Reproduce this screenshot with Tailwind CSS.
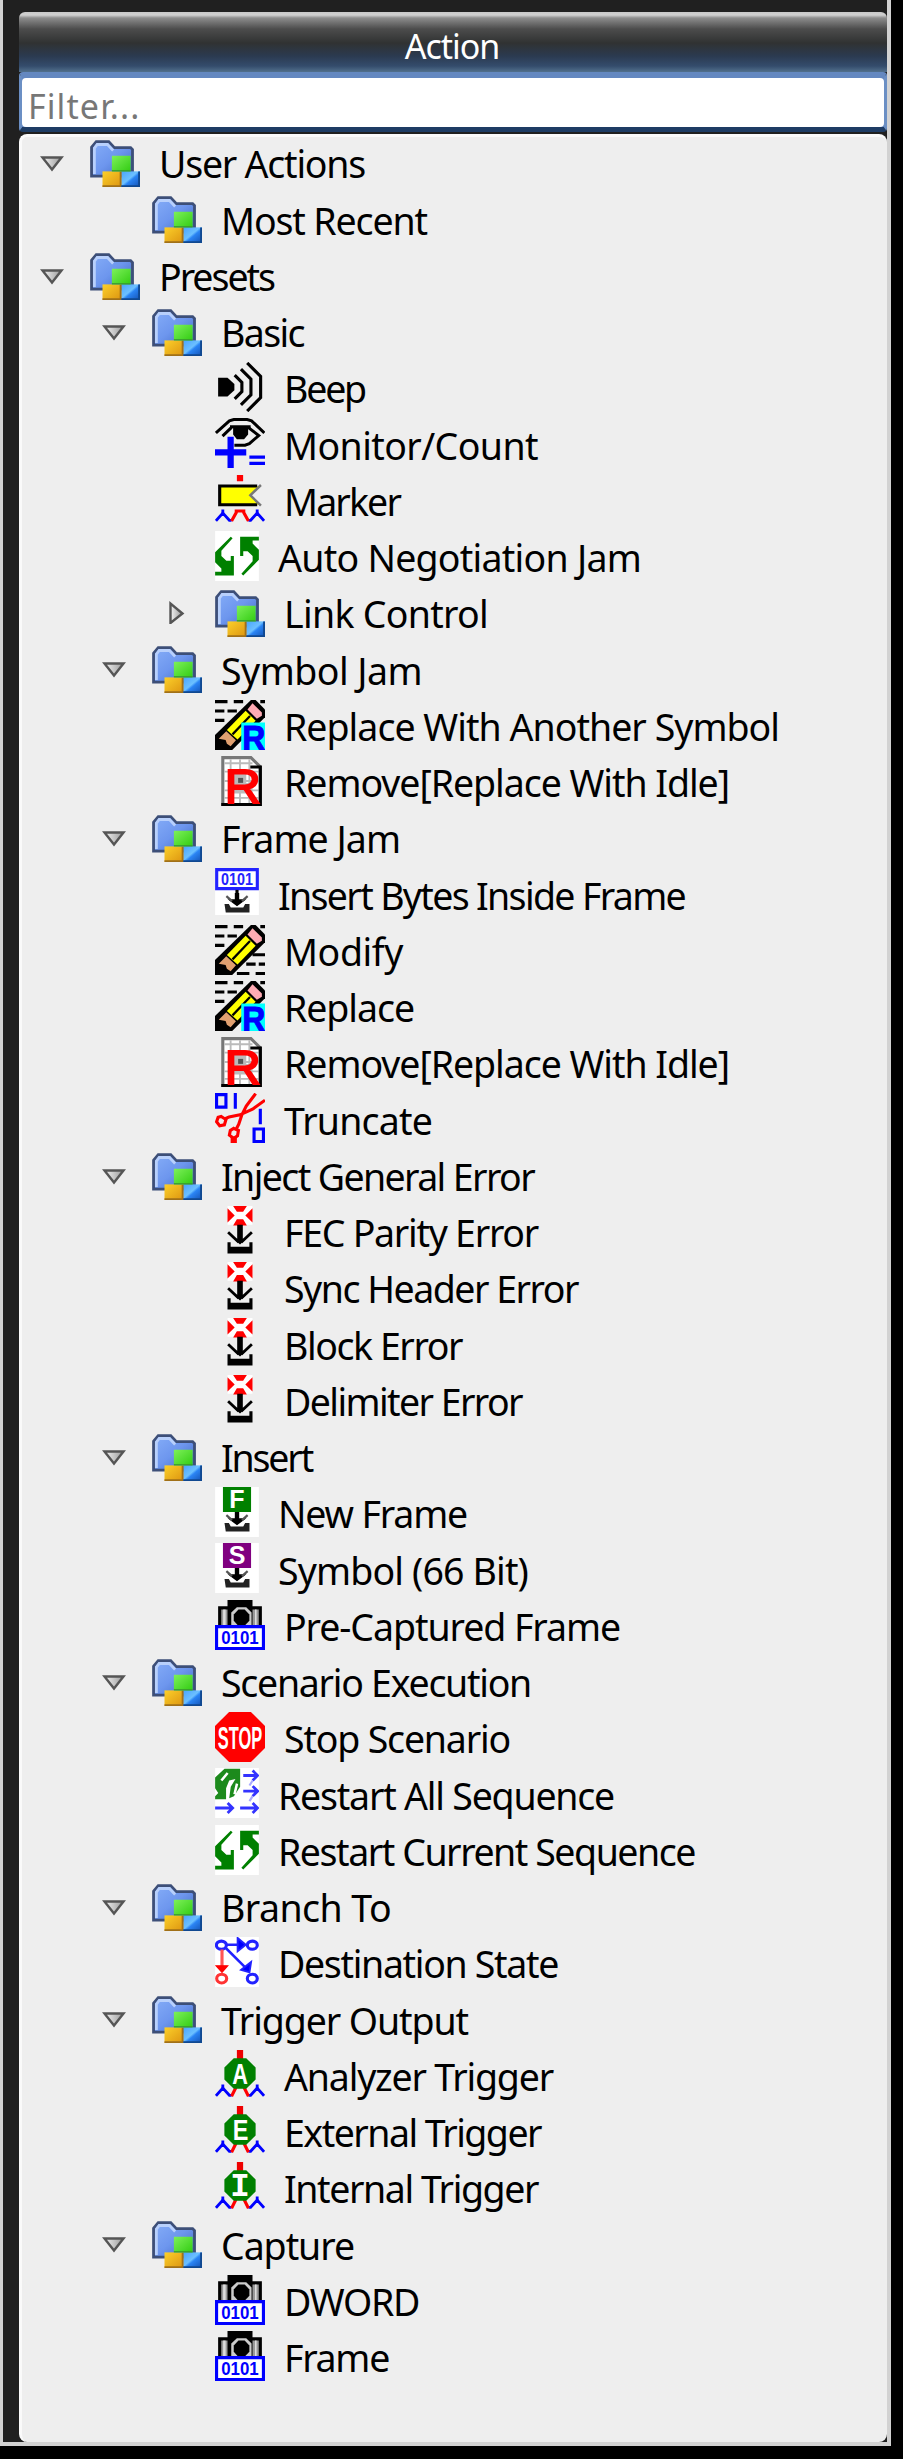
<!DOCTYPE html>
<html lang="en">

<head>
    <meta charset="UTF-8">
    <meta name="viewport" content="width=device-width, initial-scale=1.0">
    <title>Action</title>
    <script src="https://cdn.jsdelivr.net/npm/@tailwindcss/browser@4"></script>
</head>

<body class="bg-black font-['Noto_Sans',sans-serif]">
    <!-- Icons, drawn on a 16px grid -->
    <svg class="absolute size-0">
        <defs>
            <linearGradient id="gFolder" x1="0" y1="0" x2="1" y2="1">
                <stop offset="0" stop-color="#86aef8" /><stop offset=".5" stop-color="#6d96ee" /><stop offset="1" stop-color="#3f66c0" />
            </linearGradient>
            <linearGradient id="gGreen" x1="0" y1="0" x2="1" y2="1">
                <stop offset="0" stop-color="#7df05a" /><stop offset="1" stop-color="#32cc12" />
            </linearGradient>
            <linearGradient id="gOrange" x1="0" y1="0" x2="1" y2="1">
                <stop offset="0" stop-color="#fcd02a" /><stop offset="1" stop-color="#dc9410" />
            </linearGradient>
            <linearGradient id="gBlue" x1="0" y1="0" x2="1" y2="1">
                <stop offset="0" stop-color="#4aa4fc" /><stop offset=".45" stop-color="#6cc0ff" /><stop offset=".55" stop-color="#2a84f4" /><stop offset="1" stop-color="#1450b0" />
            </linearGradient>
            <linearGradient id="gArrow" x1="0" y1="0" x2="1" y2="0">
                <stop offset="0" stop-color="#f4f4f4" /><stop offset="1" stop-color="#999" />
            </linearGradient>
            <g id="recycle" fill="#008000">
                <path id="recycleArrow" d="M5 1.8L0 6.8V10L2 12V13H0V14.2H6V8H5V9.5H3.6L2 8V6.3L5.6 2.3Z" />
                <use href="#recycleArrow" transform="rotate(180 7 8)" />
            </g>
            <g id="tray">
                <path d="M6.3 8H7.7V10H10L7 12.2L4 10H6.3Z" />
                <path d="M3 11.5H4.4L5 12.6H9L9.6 11.5H11V14.2H3.4Z" fill="#222" />
                <path d="M3.6 9L5.4 10.6M10.4 9L8.6 10.6" stroke="#555" stroke-width=".7" />
            </g>
            <g id="pencil">
                <path d="M0 .5H4M6 .5H9M14.5 .5H16M0 3.5H3M4 3.5H7M0 6.5H3" stroke="#000" />
                <path d="M11.5 0H13L16 3V5.5L5.5 16H0V11.2Z" />
                <path d="M12 1L15 4V5L13.4 6L10.4 3Z" fill="#ffabb4" />
                <path d="M9.8 3.4L13 6.6L7.2 12.6L3.8 9.6Z" fill="#ff0" />
                <path d="M11.2 5.1L5.6 11" stroke="#000" stroke-width=".7" />
                <path d="M3.6 10L6.7 12.9L5 14.8L3.8 14L3.4 12.8L1.2 12.4Z" fill="#e0a070" />
            </g>
            <g id="wave" fill="none" stroke="#00f" stroke-width=".9">
                <path d="M.3 14.7L2.5 12.2L4.6 14.5H5.3M15.7 14.7L13.5 12.2L11.4 14.5H10.7" />
                <path d="M2.5 11V13M13.5 11V13" />
            </g>
            <g id="triggerBase">
                <path d="M7 0H9V3H7Z" fill="#e00" />
                <use href="#wave" />
                <path d="M5.3 14.8L6.7 12M10.7 14.8L9.3 12" stroke="red" />
                <path d="M6 2.6H10L13 5.6V9.4L10 12.4H6L3 9.4V5.6Z" fill="#008000" />
            </g>
            <g id="iconFolder" transform="translate(0 1)">
                <path d="M.5 11.5V2.3L2 .5H6L7.8 2.4H13L13.6 3V11.5Z" fill="url(#gFolder)" stroke="#3d4f78" stroke-width=".9" />
                <path d="M1.4 10.8V2.6L2.3 1.4H5.6L7.4 3.3" fill="none" stroke="#b8d0fc" stroke-width=".9" />
                <path d="M4 10H10V15H4Z" fill="url(#gOrange)" />
                <path d="M10 10H16V15H10Z" fill="url(#gBlue)" />
                <path d="M4 14.7H10M9.8 10V15" stroke="#a07018" stroke-width=".6" />
                <path d="M10 14.7H16M15.7 10V15" stroke="#104890" stroke-width=".6" />
                <path d="M7 5H13V10H7Z" fill="url(#gGreen)" />
                <path d="M7 9.8H13" stroke="#3a9a30" stroke-width=".4" />
            </g>
            <g id="iconBeep">
                <path d="M1 5H4L6.2 7V9L4 11H1Z" />
                <path d="M6.3 4.2L8.6 6.5V9.5L6.3 11.8M8.3 2.3L11.5 5.5V10.5L8.3 13.7M10.3 .3L14.6 4.6V11.4L10.3 15.7" fill="none" stroke="#000" />
            </g>
            <g id="iconMonitor">
                <path d="M.3 4.8L4.6 .9L6 .5H10.3L11.7 .9L15.8 4.8M2.4 5.8L5.3 3M10.6 3L14 5.6L11 8.2L9.6 8.7H6.2" fill="none" stroke="#000" stroke-width=".95" />
                <path d="M4.8 2.3H11.4V3.3H10.6V5.3L9.3 6.8H7L5.8 5.3V3.3H4.8Z" />
                <path d="M4 6H6V10H10V12H6V16H4V12H0V10H4Z" fill="#00f" />
                <path d="M11 12.5H16M11 14.5H16" stroke="#00f" />
            </g>
            <g id="iconMarker">
                <path d="M7 0H9V2H7Z" fill="red" />
                <path d="M1.5 3.5H14L11.3 6.5L14 9.5H1.5Z" fill="#ff0" />
                <path d="M13.5 3.5H1.5V9.5H13.5" fill="none" stroke="#000" />
                <path d="M14.7 3.2L11.3 6.5L14.7 9.8" fill="none" stroke="#777" stroke-width=".8" />
                <use href="#wave" />
                <path d="M5.3 14.7L6.8 12V11.5H9.2V12L10.7 14.7" fill="none" stroke="red" />
            </g>
            <g id="iconRecycle">
                <path d="M0 0H14V16H0Z" fill="#fff" />
                <use href="#recycle" />
            </g>
            <g id="iconReplace">
                <use href="#pencil" />
                <path d="M8.4 7.2H16V16H8.4Z" fill="#0ff" />
                <text x="8.7" y="16" font-family="Liberation Sans" font-weight="700" font-size="11" textLength="7.4" lengthAdjust="spacingAndGlyphs" fill="#00f" stroke="#00f" stroke-width=".3">R</text>
            </g>
            <g id="iconModify">
                <use href="#pencil" />
                <path d="M12 9.5H16M10 12.5H13M14 12.5H16M7 15.5H11M13 15.5H16" stroke="#000" />
            </g>
            <g id="iconRemove">
                <path d="M2.5 .5H11.5L14.5 3.5V15.5H2.5Z" fill="#fff" stroke="#777" />
                <path d="M5 1V15M8 1V15M11 1V15M3 2.3H12M3 5H14M3 8H14M3 11H14M3 13.4H14" stroke="#bbb" stroke-width=".6" />
                <path d="M6 5H10V8.6H12V12H6Z" fill="#bbb" />
                <path d="M7.4 7H9V8.6H7.4Z" fill="#555" />
                <path d="M11.3 3.5H14.5V15.5H2" fill="none" stroke="#000" />
                <text x="3" y="14.9" font-family="Liberation Sans" font-weight="400" font-size="15.6" textLength="11.7" lengthAdjust="spacingAndGlyphs" fill="red" stroke="red" stroke-width=".6">R</text>
            </g>
            <g id="iconBytes">
                <path d="M0 0H14V15H0Z" fill="#fff" />
                <path d="M.5 .5H13.5V6.6H.5Z" fill="#fff" stroke="#22f" />
                <text x="1.9" y="5.3" font-family="Liberation Sans" font-weight="700" font-size="5" textLength="10.2" lengthAdjust="spacingAndGlyphs" fill="#22f">0101</text>
                <path d="M6.5 7H7.5V9H6.5Z" />
                <use href="#tray" />
            </g>
            <g id="iconTruncate" fill="none">
                <path d="M.5 .5H3.5V4.5H.5ZM6.5 0V5M14.5 5V10M12.5 11.5H15.5V15.5H12.5Z" stroke="#00f" />
                <path d="M16 2.3L12 5.2L8 7L4.5 7.7L3.2 8.2M13 .2L10 4.2L8.6 7L7.6 10L6.8 11.5" stroke="red" />
                <path d="M2 7.5L3.5 8.5L3 10.2L1.5 10.5L.5 9.2L1 7.8ZM6 11.3L7.5 12L7.2 13.7L6 14.5L4.6 13.5L4.9 12ZM6 14V16" stroke="red" />
                <path d="M5 14H7V16H5Z" fill="red" />
            </g>
            <g id="iconError">
                <path d="M4 0H12V6H4Z" fill="#fff" />
                <path d="M5.8 0H10.2L9 1.8H7ZM4 .7L6.3 3L4 5.3ZM12 .7L9.7 3L12 5.3ZM7 4.2H9L10.2 6.2H5.8Z" fill="red" />
                <path d="M7.1 6H8.9V10.5H10L8 12.3L6 10.5H7.1Z" />
                <path d="M4.2 8.4L7.6 11.6M11.8 8.4L8.4 11.6" stroke="#000" stroke-width=".9" />
                <path d="M4 11.6H5V13H11V11.6H12V15.2H4Z" />
            </g>
            <g id="iconNewFrame">
                <path d="M0 0H14V16H0Z" fill="#fff" />
                <path d="M2.5 0H11.5V8H2.5Z" fill="#008000" />
                <text x="7" y="6.7" text-anchor="middle" font-family="Liberation Sans" font-weight="700" font-size="8" fill="#fff">F</text>
                <use href="#tray" />
            </g>
            <g id="iconSymbol">
                <path d="M0 0H14V16H0Z" fill="#fff" />
                <path d="M2.5 0H11.5V8H2.5Z" fill="#800080" />
                <text x="7" y="6.8" text-anchor="middle" font-family="Liberation Sans" font-weight="700" font-size="8" fill="#fff">S</text>
                <use href="#tray" />
            </g>
            <g id="iconCamera">
                <path d="M1 2H4V0H12V2H15V9H1Z" />
                <path d="M2 3H4V8H2ZM12 3H14V8H12Z" fill="#999" />
                <path d="M2.6 3H3.4V8H2.6ZM12.8 3H13.3V8H12.8Z" fill="#ddd" />
                <path d="M7 2.3H10L11.7 4V8H5.2V4Z" fill="#ccc" />
                <path d="M7.5 3H9.5L11 4.6V6.6L9.7 8H7.2L6 6.6V4.6Z" />
                <path d="M.5 8.5H15.5V15.5H.5Z" fill="#fff" stroke="#00f" />
                <text x="2" y="14" font-family="Liberation Sans" font-weight="700" font-size="5.9" textLength="12" lengthAdjust="spacingAndGlyphs" fill="#00f">0101</text>
            </g>
            <g id="iconStop">
                <path d="M4.5 0H11.5L16 4.5V11.5L11.5 16H4.5L0 11.5V4.5Z" fill="red" />
                <text x=".9" y="11.7" font-family="Liberation Sans" font-weight="700" font-size="10" textLength="14.2" lengthAdjust="spacingAndGlyphs" fill="#fff">STOP</text>
            </g>
            <g id="iconRestartAll">
                <path d="M0 0H14V16H0Z" fill="#fff" />
                <path d="M3 .2H8V6L6 9L4.5 9.7L5 6L6.5 3.5L4.5 4L3.5 6.5V10H0V9L1 8L0 6.5V3Z" fill="#1c8a1c" />
                <path d="M2 4L4 1.6M6.2 8.4L7 5" stroke="#fff" stroke-width=".8" />
                <path d="M9 2.4H13.5M12 .8L13.6 2.4L12 4M9 7.4H13.5M12 5.8L13.6 7.4L12 9M0 12.8H5.5M4 11.2L5.6 12.8L4 14.4M8 12.8H13.5M12 11.2L13.6 12.8L12 14.4" fill="none" stroke="#33f" stroke-width=".9" />
                <path d="M12 4L11 5.6M12 9L11 10.6" stroke="#aaf" stroke-width=".7" />
            </g>
            <g id="iconDestination" fill="none" stroke="#22f">
                <path d="M0 0H14V16H0Z" fill="#fff" stroke="none" />
                <path d="M3.5 2.5H9M3.5 3.6L10.5 10.6" stroke-width=".8" />
                <path d="M7.2 .3L9.8 2.5L7.2 4.6ZM11.5 8L11 11.3L8.3 10.5Z" fill="#00f" stroke-width=".6" />
                <ellipse cx="2" cy="2.6" rx="1.6" ry="1.3" />
                <ellipse cx="11.9" cy="2.6" rx="1.6" ry="1.3" />
                <ellipse cx="11.9" cy="13.3" rx="1.6" ry="1.4" />
                <path d="M2.2 4V9.5" stroke="#f55" />
                <path d="M.3 9.2H4L2.2 11.3Z" fill="red" stroke="red" stroke-width=".4" />
                <ellipse cx="2.1" cy="13.3" rx="1.6" ry="1.4" stroke="#f33" />
            </g>
            <g id="iconAnalyzer">
                <use href="#triggerBase" />
                <text x="8" y="10.9" text-anchor="middle" font-family="Liberation Sans" font-weight="700" font-size="9.4" textLength="5" lengthAdjust="spacingAndGlyphs" fill="#fff">A</text>
            </g>
            <g id="iconExternal">
                <use href="#triggerBase" />
                <text x="8.2" y="10.9" text-anchor="middle" font-family="Liberation Sans" font-weight="700" font-size="9.4" textLength="5" lengthAdjust="spacingAndGlyphs" fill="#fff">E</text>
            </g>
            <g id="iconInternal">
                <use href="#triggerBase" />
                <text x="8" y="10.9" text-anchor="middle" font-family="Liberation Mono" font-weight="700" font-size="10.4" fill="#fff">I</text>
            </g>
            <path id="arrowOpen" d="M2.5 7.5H21.5L12 19.5Z" fill="url(#gArrow)" stroke="#555" stroke-width="2.4" />
            <path id="arrowClosed" d="M5.5 3.5V23L17.5 13.5Z" fill="url(#gArrow)" stroke="#555" stroke-width="2.4" />
        </defs>
    </svg>

    <div class="flex h-[2446px] w-[891px] flex-col border-r-4 border-b-4 border-l-3 border-[#d2d2d2] bg-[#202020] pt-3 pl-4">
        <header class="flex h-[60px] shrink-0 items-center justify-center rounded-t-md bg-[linear-gradient(#c8c8c8_0px,#d0d0d0_3px,#8c8c8c_6px,#4c4c4c_17px,#303232_31px,#2b3a50_44px,#344c6c_54px,#52708c_60px)] pt-2 text-[34px] leading-none tracking-[-1px] text-white">
            <h1 class="mr-[2px]">Action</h1>
        </header>
        <div class="h-[60px] shrink-0 rounded-sm border-x-3 border-t-6 border-b-5 border-x-[#6b8fc4] border-t-[#6488c0] border-b-[#1e3c64] bg-[#6488c0]">
            <input type="text" placeholder="Filter..." class="block h-[49px] w-full rounded-sm bg-white px-[6px] pt-[8px] text-[34px] tracking-[1.1px] placeholder:text-[#777] outline-none">
        </div>
        <main class="mt-[2px] flex-1 rounded-lg border-t-3 border-l-3 border-[#fafafa] bg-[#eee]">
            <ul id="tree" class="-mt-[3px]"></ul>
        </main>
    </div>

    <script>
        // level, icon, label, label width, closed
        const items = [
            [0, 'Folder', 'User Actions', 206],
            [1, 'Folder', 'Most Recent', 206],
            [0, 'Folder', 'Presets', 115],
            [1, 'Folder', 'Basic', 83],
            [2, 'Beep', 'Beep', 81],
            [2, 'Monitor', 'Monitor/Count', 254],
            [2, 'Marker', 'Marker', 116],
            [2, 'Recycle', 'Auto Negotiation Jam', 363],
            [2, 'Folder', 'Link Control', 204, 'closed'],
            [1, 'Folder', 'Symbol Jam', 201],
            [2, 'Replace', 'Replace With Another Symbol', 495],
            [2, 'Remove', 'Remove[Replace With Idle]', 445],
            [1, 'Folder', 'Frame Jam', 179],
            [2, 'Bytes', 'Insert Bytes Inside Frame', 407],
            [2, 'Modify', 'Modify', 119],
            [2, 'Replace', 'Replace', 130],
            [2, 'Remove', 'Remove[Replace With Idle]', 445],
            [2, 'Truncate', 'Truncate', 148],
            [1, 'Folder', 'Inject General Error', 313],
            [2, 'Error', 'FEC Parity Error', 254],
            [2, 'Error', 'Sync Header Error', 294],
            [2, 'Error', 'Block Error', 178],
            [2, 'Error', 'Delimiter Error', 238],
            [1, 'Folder', 'Insert', 91],
            [2, 'NewFrame', 'New Frame', 189],
            [2, 'Symbol', 'Symbol (66 Bit)', 250],
            [2, 'Camera', 'Pre-Captured Frame', 336],
            [1, 'Folder', 'Scenario Execution', 310],
            [2, 'Stop', 'Stop Scenario', 226],
            [2, 'RestartAll', 'Restart All Sequence', 336],
            [2, 'Recycle', 'Restart Current Sequence', 417],
            [1, 'Folder', 'Branch To', 170],
            [2, 'Destination', 'Destination State', 280],
            [1, 'Folder', 'Trigger Output', 247],
            [2, 'Analyzer', 'Analyzer Trigger', 269],
            [2, 'External', 'External Trigger', 257],
            [2, 'Internal', 'Internal Trigger', 254],
            [1, 'Folder', 'Capture', 133],
            [2, 'Camera', 'DWORD', 135],
            [2, 'Camera', 'Frame', 105]
        ];
        const indent = ['pl-[18px]', 'pl-[80px]', 'pl-[143px]'];
        // icons that are 14 units wide instead of 16
        const narrow = ['Recycle', 'Bytes', 'NewFrame', 'Symbol', 'RestartAll', 'Destination'];

        // letter spacing that spreads a label over its width
        const ctx = document.createElement('canvas').getContext('2d');
        ctx.font = '37.5px "Noto Sans"';
        const spacing = (label, width) => ((width - ctx.measureText(label).width) / label.length).toFixed(3);

        document.getElementById('tree').innerHTML = items.map(([level, icon, label, width, closed]) => {
            const isNarrow = narrow.includes(icon);
            const hasArrow = icon === 'Folder' && label !== 'Most Recent';
            const arrow = hasArrow ? `<use href="#arrow${closed ? 'Closed' : 'Open'}" />` : '';
            return `<li class="flex h-[56.25px] items-center ${indent[level]}">
                <svg viewBox="0 0 24 24" class="mr-[26px] size-6 shrink-0">${arrow}</svg>
                <svg viewBox="0 0 ${isNarrow ? 14 : 16} 16" class="${isNarrow ? 'w-[44px]' : 'w-[50px]'} h-[50px] shrink-0"><use href="#icon${icon}" /></svg>
                <span class="ml-[19px] pt-[4px] text-[37.5px] leading-none whitespace-nowrap text-black" style="letter-spacing: ${spacing(label, width)}px">${label}</span>
            </li>`;
        }).join('');
    </script>
</body>

</html>
